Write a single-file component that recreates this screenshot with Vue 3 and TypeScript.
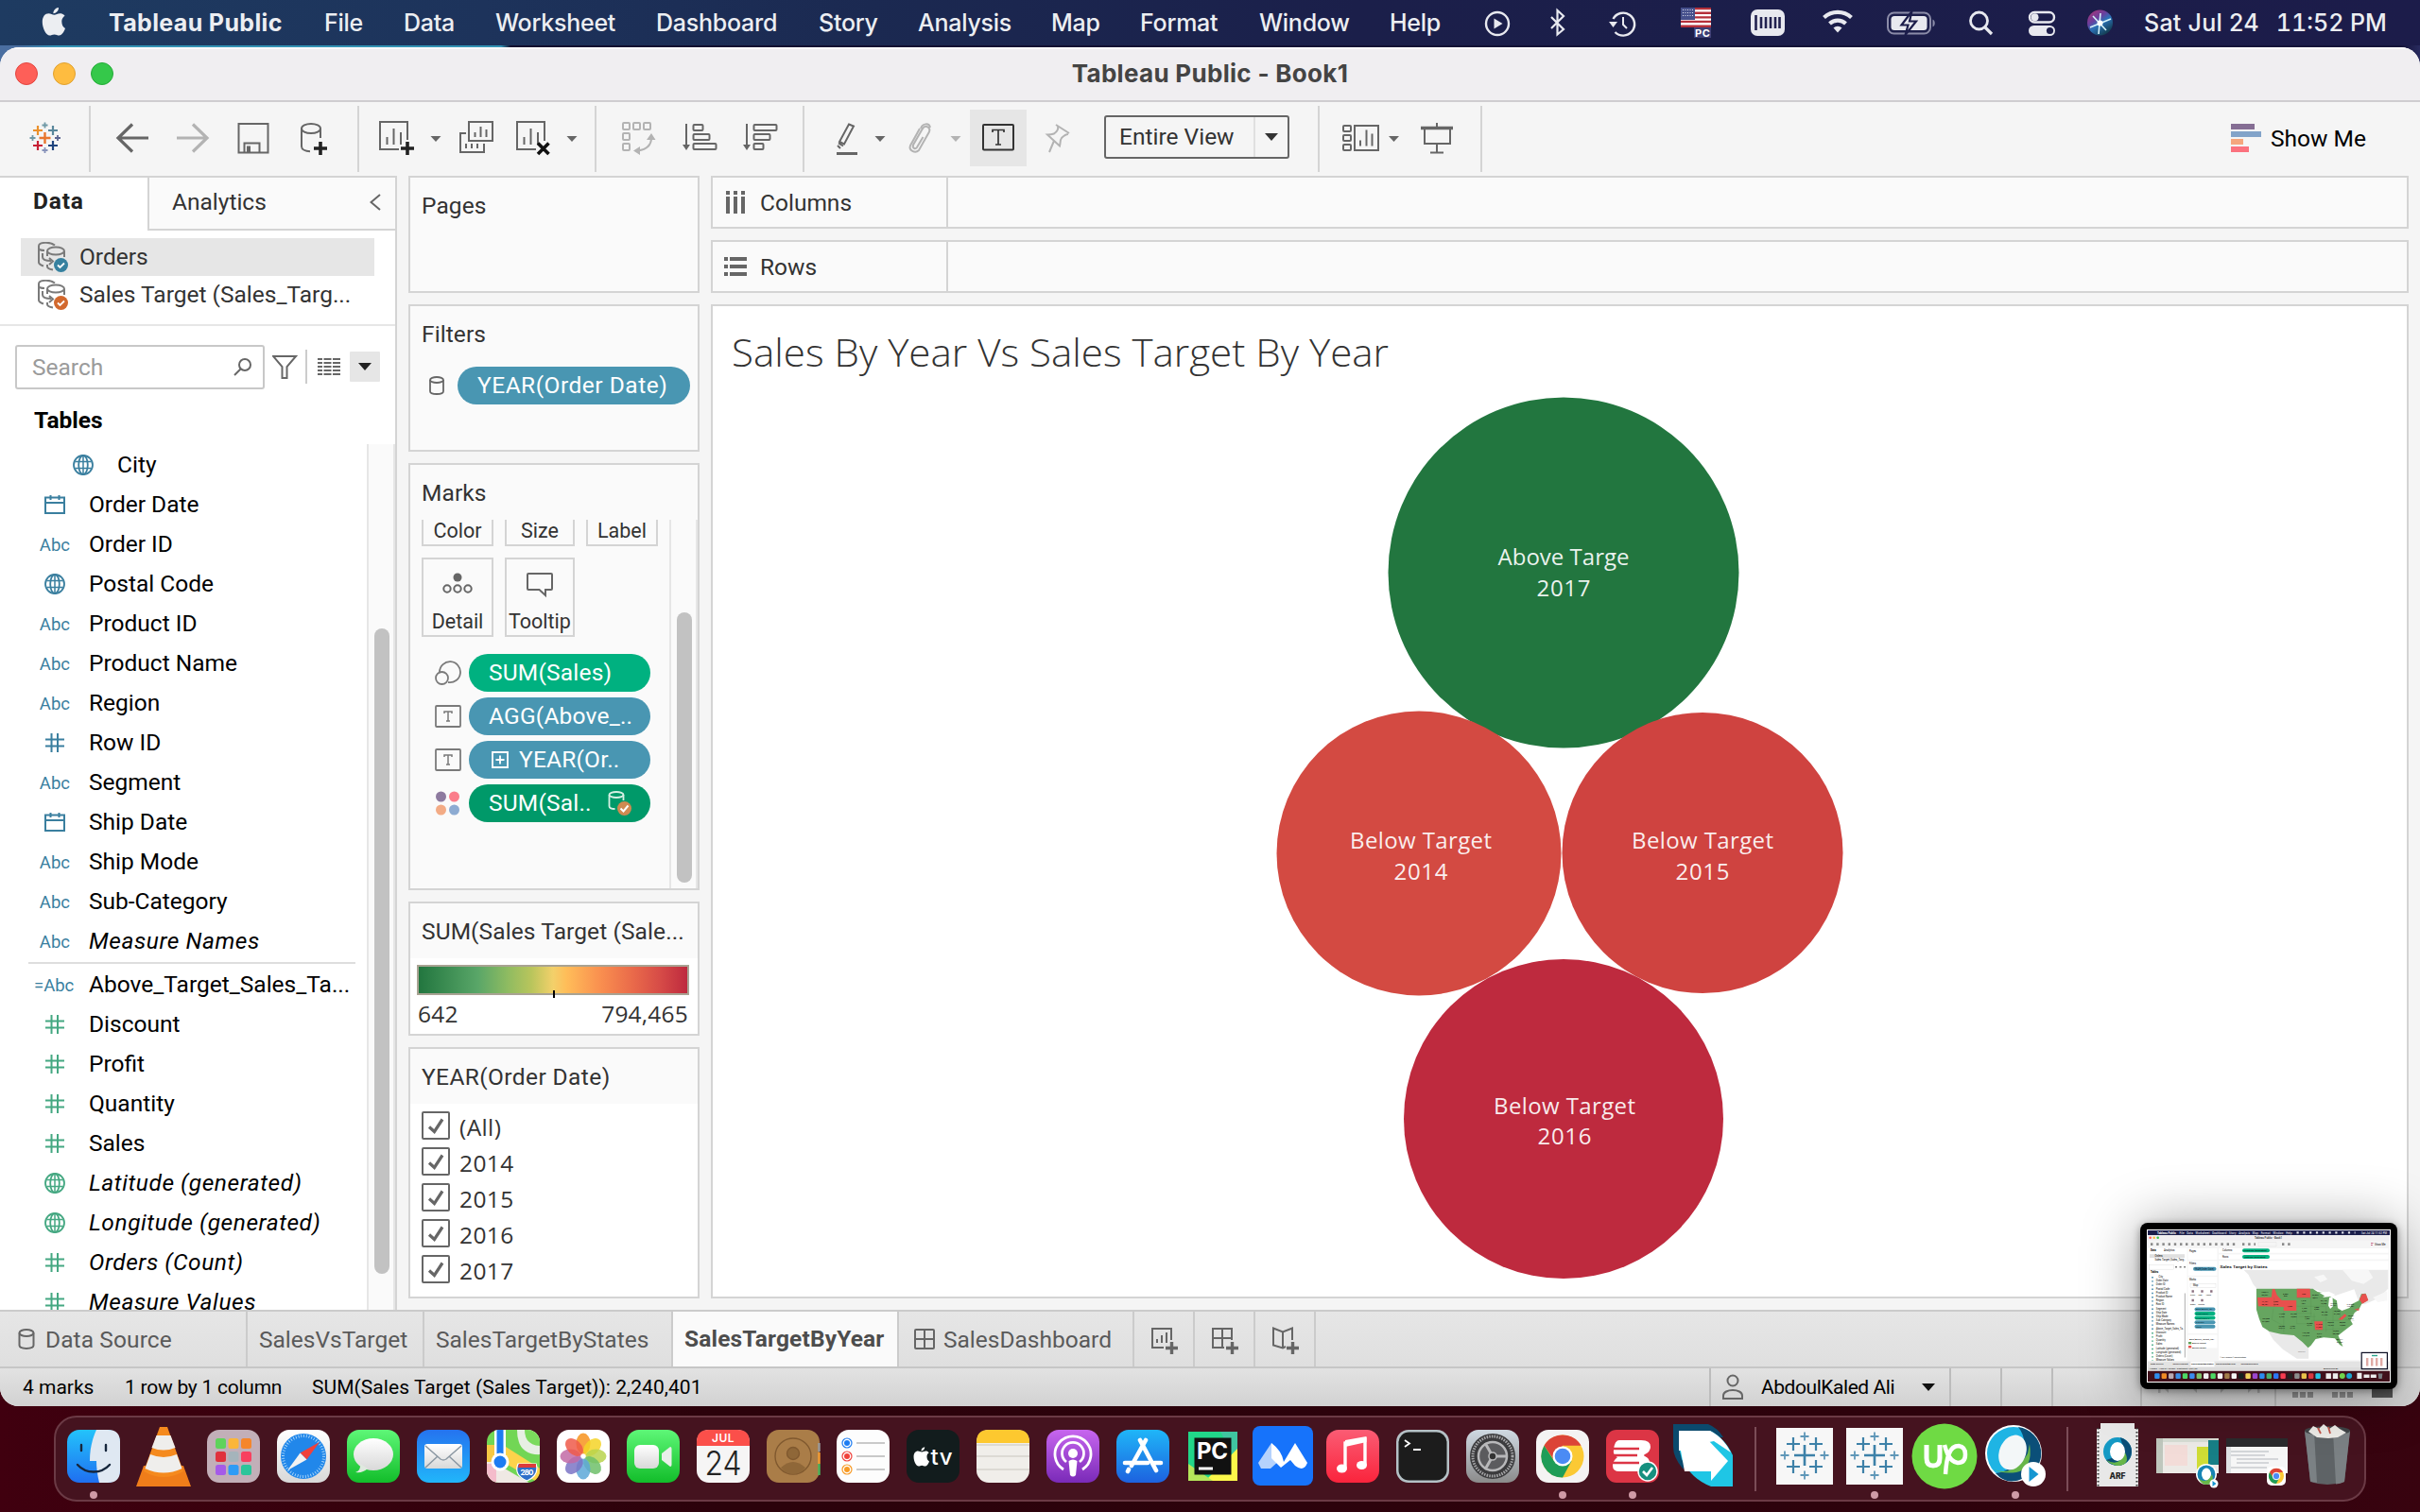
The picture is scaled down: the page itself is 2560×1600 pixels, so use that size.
<script setup lang="ts">
interface MenuItem { label: string; width: number; bold?: boolean }
interface Field { kind: 'geo' | 'date' | 'abc' | 'num' | 'calc'; label: string; generated?: boolean; nested?: boolean }
interface Cross { x: number; y: number; r: number; color: string; w: number }
interface Bubble { x: number; y: number; r: number; color: string; status: string; year: string; span: number; tx: number; ty: number }

const menu: MenuItem[] = [
  { label: 'Tableau Public', width: 228, bold: true },
  { label: 'File', width: 84 },
  { label: 'Data', width: 97 },
  { label: 'Worksheet', width: 170 },
  { label: 'Dashboard', width: 172 },
  { label: 'Story', width: 105 },
  { label: 'Analysis', width: 141 },
  { label: 'Map', width: 94 },
  { label: 'Format', width: 126 },
  { label: 'Window', width: 138 },
  { label: 'Help', width: 92 },
]

const dimensions: Field[] = [
  { kind: 'geo', label: 'City', nested: true },
  { kind: 'date', label: 'Order Date' },
  { kind: 'abc', label: 'Order ID' },
  { kind: 'geo', label: 'Postal Code' },
  { kind: 'abc', label: 'Product ID' },
  { kind: 'abc', label: 'Product Name' },
  { kind: 'abc', label: 'Region' },
  { kind: 'num', label: 'Row ID' },
  { kind: 'abc', label: 'Segment' },
  { kind: 'date', label: 'Ship Date' },
  { kind: 'abc', label: 'Ship Mode' },
  { kind: 'abc', label: 'Sub-Category' },
  { kind: 'abc', label: 'Measure Names', generated: true },
]

const measures: Field[] = [
  { kind: 'calc', label: 'Above_Target_Sales_Ta...' },
  { kind: 'num', label: 'Discount' },
  { kind: 'num', label: 'Profit' },
  { kind: 'num', label: 'Quantity' },
  { kind: 'num', label: 'Sales' },
  { kind: 'geo', label: 'Latitude (generated)', generated: true },
  { kind: 'geo', label: 'Longitude (generated)', generated: true },
  { kind: 'num', label: 'Orders (Count)', generated: true },
  { kind: 'num', label: 'Measure Values', generated: true },
]

const groups = [
  { name: 'dimensions', fields: dimensions },
  { name: 'measures', fields: measures },
]

const years = ['(All)', '2014', '2015', '2016', '2017']

const bubbles: Bubble[] = [
  { x: 1654, y: 606, r: 185.5, color: '#22763f', status: 'Above Targe', year: '2017', span: 139, tx: 1654, ty: 598 },
  { x: 1501, y: 903, r: 150.5, color: '#d34a42', status: 'Below Target', year: '2014', span: 150, tx: 1503, ty: 898 },
  { x: 1801, y: 902.5, r: 148.5, color: '#cf4340', status: 'Below Target', year: '2015', span: 150, tx: 1801, ty: 898 },
  { x: 1654, y: 1184, r: 169, color: '#be2a3e', status: 'Below Target', year: '2016', span: 150, tx: 1655, ty: 1178.5 },
]

const logo: Cross[] = [
  { x: 47.5, y: 132.5, r: 3, color: '#7099a6', w: 1.8 },
  { x: 40, y: 138, r: 5, color: '#eb912c', w: 2.2 },
  { x: 56, y: 138, r: 5, color: '#59879b', w: 2.2 },
  { x: 34.5, y: 146, r: 3, color: '#7099a6', w: 1.8 },
  { x: 47.5, y: 146, r: 6, color: '#e8762d', w: 2.4 },
  { x: 61, y: 146, r: 3, color: '#5c6692', w: 1.8 },
  { x: 40, y: 154, r: 5, color: '#c72035', w: 2.2 },
  { x: 56, y: 154, r: 5, color: '#1f447e', w: 2.2 },
  { x: 47.5, y: 159, r: 3, color: '#8792ba', w: 1.8 },
]

const dockCrosses: Cross[] = [
  { x: 0, y: -1, r: 11, color: '#3d81a8', w: 2.6 },
  { x: -12, y: -13, r: 7, color: '#3d81a8', w: 2.2 },
  { x: 12, y: -13, r: 7, color: '#3d81a8', w: 2.2 },
  { x: -12, y: 11, r: 7, color: '#3d81a8', w: 2.2 },
  { x: 12, y: 11, r: 7, color: '#3d81a8', w: 2.2 },
  { x: 0, y: -21, r: 4.5, color: '#5f97b8', w: 1.8 },
  { x: 0, y: 20, r: 4.5, color: '#5f97b8', w: 1.8 },
  { x: -21, y: -1, r: 4.5, color: '#5f97b8', w: 1.8 },
  { x: 21, y: -1, r: 4.5, color: '#5f97b8', w: 1.8 },
]

const cross = (c: Cross): string => `M${c.x - c.r} ${c.y}h${c.r * 2}M${c.x} ${c.y - c.r}v${c.r * 2}`

const petals = ['#f7931e', '#f5d327', '#b9d34c', '#6fbf6a', '#5da8d8', '#7b74c6', '#c26aa6', '#ee5a4a']
const launchpad = ['#5fd35b', '#fbb63a', '#f5862b', '#e0313c', '#a5b4bb', '#f8405f', '#a55be8', '#2f9bf5', '#2cc59a']
const miniDock = ['#2f8fee', '#f08a24', '#b8aab2', '#3b8fe6', '#4cd964', '#3a8bf0', '#7cc36a', '#f0f0f0', '#4cd964', '#f5f5f5', '#a37d4b', '#f5f5f5', '#15201f', '#f3d35c', '#9c45cf', '#2a8cf0', '#48b06a', '#2b78f5', '#f83b50', '#222222', '#8c8c8c', '#e9c14a', '#d9383f', '#26c4e4']
const miniFields = ['City', 'Order Date', 'Order ID', 'Postal Code', 'Product ID', 'Product Name', 'Region', 'Row ID', 'Segment', 'Ship Date', 'Ship Mode', 'Sub-Category', 'Measure Names', 'Above_Target_Sales_Ta..', 'Discount', 'Profit', 'Quantity', 'Sales', 'Latitude (generated)', 'Longitude (generated)', 'Orders (Count)', 'Measure Values']
const stateLabels: [number, number, string, string][] = [
  [1240, 265, '138,641', '56,667'], [1284, 270, '5,589', '833'], [1323, 270, '920', ''], [1347, 275, '29,863', '5,677'],
  [1240, 295, '17,431', '28,481'], [1263, 295, '4,382', '4,618'], [1293, 309, '1,603', ''], [1322, 292, '1,315', '704'],
  [1365, 292, '32,115', '12,953'], [1324, 316, '7,465', '2,929'], [1350, 312, '4,580', '3,383'], [1386, 300, '76,270', '36,161'],
  [1242, 350, '457,688', '274,087'], [1276, 335, '11,220', '3,766'], [1301, 335, '32,108', '15,203'], [1330, 342, '2,914', '1,236'],
  [1367, 328, '80,166', '41,246'], [1393, 326, '78,258', '31,402'], [1335, 363, '19,683', '3,177'], [1355, 368, '11,678', '14,267'],
  [1276, 372, '35,282', '24,914'], [1299, 372, '4,784', '2,147'], [1380, 362, '30,662', '19,104'], [1405, 362, '55,603', '19,866'],
  [1327, 394, '170,188', '121,072'], [1356, 398, '9,217', '3,131'], [1391, 388, '49,096', '28,785'], [1399, 415, '89,474', '54,202'],
  [1422, 303, '310,876', '176,381'], [1423, 340, '70,637', '9,932'],
]
</script>

<template>
  <div class="desktop">
    <header class="menubar">
      <svg class="apple" viewBox="0 0 26 34" width="26" height="34">
        <path fill="#eceef2" d="M18 2c.2 3.300-2.600 6.200-5.600 6.200C12.200 5 15 2.200 18 2zM21.300 16.600c0-2.700 1.400-4.500 3.300-5.800-1.500-2-3.700-2.600-5.200-2.600-2.400 0-4.200 1.500-6 1.500-1.900 0-3.700-1.500-6-1.500C3.700 8.200.8 11.500.8 17.200.8 24 5 31.600 8.500 31.600c1.800 0 2.700-1.200 5-1.200s3.100 1.200 5 1.200c3.200 0 5.700-5 6.500-7.500-2.400-1.200-3.700-3.900-3.700-7.500z" />
      </svg>
      <nav class="menus">
        <span v-for="m in menu" :key="m.label" :class="{ strong: m.bold }" :style="{ width: m.width + 'px' }">{{ m.label }}</span>
      </nav>
      <svg class="extras" viewBox="1563 0 695 48" width="695" height="48" fill="none" stroke="#e8e9ef" stroke-width="2.4">
        <circle cx="1584" cy="25" r="12" /><path d="M1580.500 19.500v11l9-5.500z" fill="#e8e9ef" stroke="none" />
        <path d="M1641 18l13 13-6.500 5.500V11l6.500 6-13 13" stroke-width="2.200" />
        <path d="M1706.500 20a12 12 0 1 1 2 14" /><path d="M1702 23h9l-4.500 6z" fill="#e8e9ef" stroke="none" /><path d="M1717 18v8l4 4" stroke-width="2" />
        <g stroke="none">
          <rect x="1778" y="8" width="32" height="21" fill="#fff" />
          <path fill="#b5303a" d="M1778 8h32v2.300h-32zM1778 12.600h32v2.300h-32zM1778 17.200h32v2.300h-32zM1778 21.800h32v2.300h-32zM1778 26.400h32v2.600h-32z" />
          <rect x="1778" y="8" width="15" height="13" fill="#46508c" />
          <path d="M1780 10.500h12M1780 13.500h12M1780 16.500h12" stroke="#dfe2f0" stroke-width="1" stroke-dasharray="1 1.500" />
          <rect x="1792" y="29" width="18" height="11" fill="#3d3f75" />
        </g>
        <text x="1793" y="38.500" class="pc">PC</text>
        <rect x="1852" y="10" width="36" height="28" rx="7" fill="#e8e9ef" stroke="none" />
        <path d="M1857.500 16v16M1863 18v12M1868 18v12M1873 18v12M1878 18v12M1882.500 18v12" stroke="#22224f" stroke-width="2.600" />
        <path d="M1929.500 18.500a21.500 21.500 0 0 1 29 0" stroke-width="4.200" /><path d="M1935.500 25a12.500 12.500 0 0 1 17 0" stroke-width="4.200" /><path d="M1944 34.500l-4.500-5a6.500 6.500 0 0 1 9 0z" fill="#e8e9ef" stroke="none" />
        <rect x="1997" y="13.500" width="45" height="22" rx="6.500" stroke="#8b8ca8" stroke-width="2" /><path d="M2044.500 20.500v8c3-1.300 3-6.700 0-8z" fill="#8b8ca8" stroke="none" />
        <rect x="2000.500" y="17" width="38" height="15" rx="3.500" fill="#e8e9ef" stroke="none" /><path d="M2022.500 12l-11 14.500h7l-3 10.500 11.500-14.500h-7z" fill="#e8e9ef" stroke="#1c1d4b" stroke-width="2.200" />
        <circle cx="2093.500" cy="22" r="9" stroke-width="2.800" /><path d="M2100 29l7 7" stroke-width="3.200" />
        <rect x="2147" y="13" width="26" height="10.500" rx="5.200" /><circle cx="2152.500" cy="18.200" r="4" fill="#e8e9ef" stroke="none" />
        <rect x="2146" y="27" width="28" height="11" rx="5.500" fill="#e8e9ef" stroke="none" /><circle cx="2168.500" cy="32.500" r="3.600" fill="#1c1d4b" stroke="none" />
        <defs><linearGradient id="siri" x1="0" y1="0" x2=".7" y2="1"><stop offset="0" stop-color="#b6336f" /><stop offset=".4" stop-color="#6a3f9e" /><stop offset=".6" stop-color="#2b72b8" /><stop offset="1" stop-color="#123a4a" /></linearGradient></defs>
        <circle cx="2221.500" cy="24" r="13.500" fill="url(#siri)" stroke="none" />
        <path d="M2211 29l22-9M2214 17l14 15M2222 14l-2 22" stroke="#d5f3fb" stroke-width="1.600" /><circle cx="2221.500" cy="24.500" r="3" fill="#fff" stroke="none" />
      </svg>
      <span class="clock"><span>Sat Jul 24</span><span class="time">11:52 PM</span></span>
    </header>

    <main class="window">
      <div class="titlebar">
        <i class="light red" /><i class="light amber" /><i class="light green" />
        <span class="title">Tableau Public - Book1</span>
      </div>

      <div class="toolbar">
        <svg class="seg" viewBox="0 112 96 70" width="96" height="70">
          <path v-for="(c, i) in logo" :key="i" :d="cross(c)" :stroke="c.color" :stroke-width="c.w" />
        </svg>
        <svg class="seg" viewBox="96 112 284 70" width="284" height="70" fill="none" stroke="#666" stroke-width="2">
          <path d="M125 146h32M140 131.500L125 146l15 14.500" stroke-width="3.200" />
          <path d="M187 146h32M204 131.500L219 146l-15 14.500" stroke="#b3b3b3" stroke-width="3.200" />
          <path d="M252.500 131h31v30.500h-31zM258.500 161v-9.500h16V161M264 161v-5.500h-2v5.500" />
          <ellipse cx="329" cy="136" rx="10" ry="5" /><path d="M319 136v19c0 3 4 5 9 5.300M339 136v10" />
          <path d="M332 157h14M339 150v14" stroke="#222" stroke-width="3.600" />
        </svg>
        <svg class="seg" viewBox="380 112 251 70" width="251" height="70" fill="none" stroke="#666" stroke-width="2">
          <path d="M422 158h-20v-29h29v19M409.500 153v-8M416.500 153v-17M424 153v-13" />
          <path d="M424 157h14M431 150v14" stroke="#222" stroke-width="3.600" />
          <path d="M455.500 144h11l-5.500 6z" fill="#666" stroke="none" />
          <path d="M496 129h25v20h-25zM502.500 145v-5M508.500 145v-11M514.500 145v-8M493 141h-6v20h25v-9M493 157v-5M499 157v-5M505 157v-5" />
          <path d="M567 158h-20v-29h29v19M554.500 153v-8M561.500 153v-17M569 153v-13M576 149v-8" />
          <path d="M569 151.500l11.500 11.500M580.500 151.500L569 163" stroke="#111" stroke-width="3.600" />
          <path d="M599.500 144h11l-5.500 6z" fill="#666" stroke="none" />
        </svg>
        <svg class="seg" viewBox="631 112 220 70" width="220" height="70" fill="none" stroke="#666" stroke-width="2">
          <g stroke="#b3b3b3">
            <rect x="659" y="130" width="7" height="7" rx="1" /><rect x="670" y="130" width="7" height="7" rx="1" /><rect x="681" y="130" width="7" height="7" rx="1" />
            <rect x="659" y="141" width="7" height="7" rx="1" /><rect x="659" y="152" width="7" height="7" rx="1" />
            <path d="M689 146c0 8-5 12-14 13.500" /><path d="M684 148l5-7 4.500 7zM677 155l-7 4.500 7 4.500z" fill="#b3b3b3" stroke="none" />
          </g>
          <path d="M726 131v24" /><path d="M722 153h8l-4 6z" fill="#666" stroke="none" />
          <rect x="733.500" y="132" width="10" height="6" rx="1" /><rect x="733.500" y="142" width="17" height="6" rx="1" /><rect x="733.500" y="152" width="24" height="6" rx="1" />
          <path d="M790 131v24" /><path d="M786 153h8l-4 6z" fill="#666" stroke="none" />
          <rect x="797.500" y="132" width="24" height="6" rx="1" /><rect x="797.500" y="142" width="17" height="6" rx="1" /><rect x="797.500" y="152" width="10" height="6" rx="1" />
        </svg>
        <svg class="seg open" viewBox="851 112 317 70" width="317" height="70" fill="none" stroke="#666" stroke-width="2">
          <path d="M898 131.500l5 2-10 19-5-2.500zM887 151.500l5 3M886 154l3 3" /><path d="M885 162.500h22" stroke-width="3" />
          <path d="M925.500 144h11l-5.500 6z" fill="#666" stroke="none" />
          <path d="M976.500 145l-6 10c-1.500 4-6 2-4.300-2l9.500-16.500c3-5 9.500-2 7 3.500L972 159c-4 4-11 0-9-5l10-18M984 135c-1-5-8-5-10 1" stroke="#b3b3b3" />
          <path d="M1005.500 144h11l-5.500 6z" fill="#b3b3b3" stroke="none" />
          <rect x="1026" y="116" width="60" height="60" fill="#e6e6e6" stroke="none" />
          <rect x="1040" y="132" width="32" height="26.500" rx="1" stroke="#333" /><path d="M1050 140v-2.500h12v2.500M1056 137.500V153M1053 153h6" stroke="#333" stroke-width="1.700" />
          <path d="M1117 132l14 9M1119 133.500c1 4-1 6-4 8-3 1-5 1-7 1l13 12c1-3 0-6 2-8.500 2-2 4-4 7-4M1115 149l-5 12" stroke="#b3b3b3" />
        </svg>
        <div class="fit"><span>Entire View</span><i><svg viewBox="0 0 14 8" width="14" height="8"><path d="M0 0h14l-7 8z" fill="#333" /></svg></i></div>
        <svg class="seg" viewBox="1364 112 32 70" width="32" height="70" />
        <svg class="seg" viewBox="1396 112 172 70" width="172" height="70" fill="none" stroke="#666" stroke-width="2">
          <rect x="1421" y="133" width="8" height="6" rx="1" /><rect x="1421" y="143" width="8" height="6" rx="1" /><rect x="1421" y="153" width="8" height="6" rx="1" />
          <path d="M1433 133h25v26h-25zM1439 154.500v-6M1445.500 154.500v-17M1451.500 154.500v-13" />
          <path d="M1469 144h11l-5.500 6z" fill="#666" stroke="none" />
          <path d="M1507 136v16h27v-16M1520 130v5M1520 152v10M1513 161.500h14" /><path d="M1503 135.500h34" stroke-width="3.500" />
        </svg>
        <div class="showme">
          <svg viewBox="0 0 32 30" width="32" height="30"><path fill="#856e94" d="M0 0h25v6H0z" /><path fill="#82a3c9" d="M0 8h32v6H0z" /><path fill="#f5a67d" d="M0 16h13v6H0z" /><path fill="#fb727e" d="M0 24h19v6H0z" /></svg>
          <span>Show Me</span>
        </div>
      </div>

      <section class="workspace">
        <aside class="side">
          <div class="tabs">
            <span class="on">Data</span>
            <span class="off">Analytics<svg viewBox="0 0 12 18" width="12" height="18"><path d="M11 1L1.500 9l9.500 8" fill="none" stroke="#666" stroke-width="2" /></svg></span>
          </div>
          <div class="sources">
            <div v-for="(s, i) in ['Orders', 'Sales Target (Sales_Targ...']" :key="s" class="source" :class="{ picked: i === 0 }">
              <svg viewBox="0 0 32 32" width="32" height="32" fill="none" stroke="#7a7a7a" stroke-width="2">
                <path d="M18 3.500C13-.5 1 0 1 4.500v17c0 2 2 3 5 4M1 7c1 2 4 2 6 2" /><ellipse cx="19" cy="9.500" rx="9" ry="4" /><path d="M28 10v6M10 10v5M5 12v4c0 3 3 4 9 4M12 17l4 3.500-4 3.500M10 24v2c0 2 3 3 6 3.500" />
                <circle cx="24.500" cy="24.500" r="7.500" :fill="i === 0 ? '#35809f' : '#d2682d'" stroke="none" /><path d="M21 24.500l2.500 2.500 4.500-4.500" stroke="#fff" stroke-width="1.800" />
              </svg>
              <span>{{ s }}</span>
            </div>
          </div>
          <div class="search">
            <div class="box"><span>Search</span><svg viewBox="0 0 19 19" width="19" height="19"><circle cx="12" cy="7" r="6" fill="none" stroke="#666" stroke-width="2" /><path d="M7.500 11.500L1 18" stroke="#666" stroke-width="2" /></svg></div>
            <svg viewBox="288 365 116 48" width="116" height="48" fill="none" stroke="#666" stroke-width="2">
              <path d="M289 377h24l-9.500 11v12h-5v-12z" /><path d="M324 370v36" stroke="#ccc" />
              <g stroke-width="2"><path d="M336 380h5M342.500 380h8M352 380h8M336 384h5M342.500 384h8M352 384h8M336 388h5M342.500 388h8M352 388h8M336 392h5M342.500 392h8M352 392h8M336 396h5M342.500 396h8M352 396h8" /></g>
              <rect x="370" y="372" width="32" height="32" rx="1" fill="#e6e6e6" stroke="none" /><path d="M379 384h14l-7 8z" fill="#222" stroke="none" />
            </svg>
          </div>
          <h3>Tables</h3>
          <div class="fields">
            <div class="list">
              <div v-for="g in groups" :key="g.name" class="group" :class="g.name">
                <div v-for="f in g.fields" :key="f.label" class="field" :class="{ nested: f.nested, generated: f.generated }">
                  <b v-if="f.kind === 'abc'">Abc</b>
                  <b v-else-if="f.kind === 'calc'">=Abc</b>
                  <svg v-else-if="f.kind === 'geo'" viewBox="0 0 22 22" width="22" height="22" fill="none" stroke="currentColor" stroke-width="1.800"><circle cx="11" cy="11" r="10" /><ellipse cx="11" cy="11" rx="4.800" ry="10" /><path d="M11 1v20M2.500 7.500h17M2.500 14.500h17" stroke-width="1.500" /></svg>
                  <svg v-else-if="f.kind === 'date'" viewBox="0 0 22 22" width="22" height="22" fill="none" stroke="currentColor" stroke-width="2"><path d="M1 3.500h20V20H1zM1 9h20M6.500 1v5M15.500 1v5" /></svg>
                  <svg v-else viewBox="0 0 22 22" width="22" height="22" fill="none" stroke="currentColor" stroke-width="2"><path d="M1 7.500h20M1 14.500h20M7.500 1v20M14 1v20" /></svg>
                  <span>{{ f.label }}</span>
                </div>
              </div>
            </div>
            <div class="track"><i /></div>
          </div>
        </aside>

        <div class="cards">
          <div class="card pages"><h4>Pages</h4></div>
          <div class="card filters">
            <h4>Filters</h4>
            <div class="frow">
              <svg viewBox="0 0 16 20" width="16" height="20" fill="none" stroke="#666" stroke-width="1.800"><ellipse cx="8" cy="4" rx="7" ry="3" /><path d="M1 4v12c0 4 14 4 14 0V4" /></svg>
              <span class="pill wide">YEAR(Order Date)</span>
            </div>
          </div>
          <div class="card marks">
            <h4>Marks</h4>
            <div class="marksbody">
              <div class="encodings">
                <div class="btns cut"><span>Color</span><span>Size</span><span>Label</span></div>
                <div class="btns">
                  <span><svg viewBox="0 0 32 24" width="32" height="24" fill="none" stroke="#666" stroke-width="2"><circle cx="16" cy="6" r="4.500" fill="#666" stroke="none" /><circle cx="5" cy="18" r="3.700" /><circle cx="16" cy="18" r="3.700" /><circle cx="27" cy="18" r="3.700" /></svg>Detail</span>
                  <span><svg viewBox="0 0 30 28" width="30" height="28" fill="none" stroke="#666" stroke-width="2"><path d="M3 2h24q1 0 1 1v15q0 1-1 1h-6v6l-6.500-6H3q-1 0-1-1V3q0-1 1-1z" /></svg>Tooltip</span>
                </div>
                <div class="mrow">
                  <svg viewBox="0 0 28 28" width="28" height="28" fill="none" stroke="#7a7a7a" stroke-width="1.800"><path d="M5 13A11 11 0 1 1 14 24" /><circle cx="7.500" cy="19.500" r="6.500" /></svg>
                  <span class="pill sales">SUM(Sales)</span>
                </div>
                <div v-for="n in 2" :key="n" class="mrow">
                  <svg viewBox="0 0 28 28" width="28" height="28" fill="none" stroke="#7a7a7a" stroke-width="1.800"><rect x="1" y="3" width="26" height="22" rx="1" /><path d="M10 11V9h8v2M14 9v10M12 19h4" stroke-width="1.500" /></svg>
                  <span v-if="n === 1" class="pill">AGG(Above_..</span>
                  <span v-else class="pill"><svg class="plus" viewBox="0 0 18 18" width="18" height="18" fill="none" stroke="#fff" stroke-width="1.800"><path d="M1 1h16v16H1zM4.500 9h9M9 4.500v9" /></svg>YEAR(Or..</span>
                </div>
                <div class="mrow">
                  <svg viewBox="0 0 28 28" width="28" height="28"><circle cx="6.500" cy="7" r="5.500" fill="#8d7a9f" /><circle cx="20.500" cy="7" r="5.500" fill="#fb7d8b" /><circle cx="6.500" cy="21" r="5.500" fill="#f3ab85" /><circle cx="20.500" cy="21" r="5.500" fill="#8dabd2" /></svg>
                  <span class="pill target">SUM(Sal..<svg class="blend" viewBox="0 0 26 28" width="26" height="28" fill="none" stroke="#d7f0e4" stroke-width="1.800"><ellipse cx="9" cy="5" rx="7.500" ry="3" /><path d="M1.500 5v12c0 2 3 3 6 3M16.500 5v6" /><circle cx="17.500" cy="19.500" r="7.500" fill="#d08a52" stroke="none" /><path d="M13.500 19.500l3 3 5-6" stroke="#fff" stroke-width="2" /></svg></span>
                </div>
              </div>
              <div class="track"><i /></div>
            </div>
          </div>
          <div class="card legend">
            <h4>SUM(Sales Target (Sale...</h4>
            <div class="ramp"><i /></div>
            <div class="ends"><span>642</span><span>794,465</span></div>
          </div>
          <div class="card yearcard">
            <h4>YEAR(Order Date)</h4>
            <label v-for="y in years" :key="y"><svg viewBox="0 0 30 30" width="30" height="30" fill="none" stroke="#666"><rect x="1" y="1" width="28" height="28" rx="1" stroke-width="2" /><path d="M8 16.500l5.500 5L22 8.500" stroke-width="3.200" /></svg><span>{{ y }}</span></label>
          </div>
        </div>

        <div class="canvas">
          <div class="shelf"><span><svg viewBox="0 0 24 24" width="24" height="24" fill="#666"><path d="M2 0h4v4H2zM10 0h4v4h-4zM18 0h4v4h-4zM2 6h4v18H2zM10 6h4v18h-4zM18 6h4v18h-4z" /></svg>Columns</span></div>
          <div class="shelf"><span><svg viewBox="0 0 24 24" width="24" height="24" fill="#666"><path d="M0 2h4v4H0zM0 10h4v4H0zM0 18h4v4H0zM6 2h18v4H6zM6 10h18v4H6zM6 18h18v4H6z" /></svg>Rows</span></div>
          <div class="view">
            <svg viewBox="754 324 1792 1048" width="1792" height="1048">
              <text x="774" y="388" class="vtitle" textLength="695" lengthAdjust="spacingAndGlyphs">Sales By Year Vs Sales Target By Year</text>
              <g v-for="b in bubbles" :key="b.year">
                <circle :cx="b.x" :cy="b.y" :r="b.r" :fill="b.color" />
                <text :x="b.tx" :y="b.ty" class="mark" :textLength="b.span">{{ b.status }}</text>
                <text :x="b.tx" :y="b.ty + 32.5" class="mark" textLength="57">{{ b.year }}</text>
              </g>
            </svg>
          </div>
        </div>
      </section>

      <div class="sheets">
        <span class="ds"><svg viewBox="0 0 18 22" width="18" height="22" fill="none" stroke="#666" stroke-width="2"><ellipse cx="9" cy="4.500" rx="7.500" ry="3.500" /><path d="M1.500 4.500v13c0 4.500 15 4.500 15 0v-13" /></svg>Data Source</span>
        <span class="s1">SalesVsTarget</span>
        <span class="s2">SalesTargetByStates</span>
        <span class="s3 current">SalesTargetByYear</span>
        <span class="s4"><svg viewBox="0 0 22 22" width="22" height="22" fill="none" stroke="#666" stroke-width="2"><rect x="1" y="1" width="20" height="20" rx="1" /><path d="M1 11h20M11 1v20" /></svg>SalesDashboard</span>
        <span class="add"><svg viewBox="0 0 30 30" width="30" height="30" fill="none" stroke="#666" stroke-width="2"><path d="M14 22H2V2h20v12M7 17v-4M12 17V9M17 17V6" /><path d="M16 22.500h13M22.500 16v13" stroke-width="3.400" /></svg></span>
        <span class="add"><svg viewBox="0 0 30 30" width="30" height="30" fill="none" stroke="#666" stroke-width="2"><path d="M14 22H2V2h20v12M2 12h20M12 2v20" /><path d="M16 22.500h13M22.500 16v13" stroke-width="3.400" /></svg></span>
        <span class="add"><svg viewBox="0 0 30 30" width="30" height="30" fill="none" stroke="#666" stroke-width="2"><path d="M15 21l-3 1.500-10-3V1.500l10 4 10-4V14M12 5.500v17" /><path d="M16 22.500h13M22.500 16v13" stroke-width="3.400" /></svg></span>
      </div>

      <footer class="status">
        <span class="t1">4 marks</span><span class="t2">1 row by 1 column</span><span class="t3">SUM(Sales Target (Sales Target)): 2,240,401</span>
        <div class="user">
          <svg viewBox="0 0 22 28" width="22" height="28" fill="none" stroke="#666" stroke-width="2"><circle cx="11" cy="7" r="5.500" /><path d="M1 26v-3c0-8 20-8 20 0v3z" /></svg>
          <span>AbdoulKaled Ali</span>
          <svg viewBox="0 0 14 8" width="14" height="8"><path d="M0 0h14l-7 8z" fill="#111" /></svg>
        </div>
        <svg class="nav" viewBox="2064 1448 496 40" width="496" height="40" fill="#b0b0b0">
          <path d="M2117 1448v40M2171 1448v40M2265 1448v40M2407 1448v40" stroke="#bcbcbc" stroke-width="2" />
          <path d="M2283 1458h2.500v16h-2.500zM2294 1458v16l-8-8zM2324 1458v16l-8-8zM2349 1458v16l8-8zM2378 1458v16l8-8zM2388 1458h2.500v16h-2.500z" />
          <path d="M2425 1464h6v5h-6zM2433 1464h6v5h-6zM2441 1464h6v5h-6zM2425 1473h6v6h-6zM2433 1473h6v6h-6zM2441 1473h6v6h-6zM2467 1465h22v5h-22zM2467 1473h6v6h-6zM2475 1473h6v6h-6zM2483 1473h6v6h-6z" fill="#909090" /><path d="M2509 1460h22v19h-22z" fill="#555" />
        </svg>
      </footer>
    </main>

    <div class="preview">
      <svg viewBox="0 0 2560 1600" width="256" height="160">
        <rect width="2560" height="1600" fill="#f5f5f5" />
        <rect width="2560" height="50" fill="#1c1e4c" />
        <text x="100" y="36" fill="#fff" font-size="30" font-weight="700">Tableau Public</text>
        <text x="335" y="36" fill="#fff" font-size="28" textLength="1190">File&nbsp; &nbsp;Data&nbsp; &nbsp;Worksheet&nbsp; &nbsp;Dashboard&nbsp; &nbsp;Story&nbsp; &nbsp;Analysis&nbsp; &nbsp;Map&nbsp; &nbsp;Format&nbsp; &nbsp;Window&nbsp; &nbsp;Help</text>
        <text x="2260" y="36" fill="#fff" font-size="28" textLength="270">Sat Jul 24 11:52 PM</text>
        <path d="M1575 24h620" stroke="#dcdde6" stroke-width="22" stroke-dasharray="22 46" />
        <rect y="50" width="2560" height="56" fill="#f0eef1" />
        <circle cx="27" cy="78" r="13" fill="#fe5f58" /><circle cx="67" cy="78" r="13" fill="#febc40" /><circle cx="107" cy="78" r="13" fill="#35c84a" />
        <text x="1130" y="86" font-size="28" font-weight="700" fill="#444">Tableau Public - Book1</text>
        <path d="M30 146h380M400 146h230M650 146h300M1000 146h140M1420 146h120" stroke="#8a8a8a" stroke-width="26" stroke-dasharray="24 38" />
        <path d="M1170 125h190v44h-190z" fill="none" stroke="#ddd" stroke-width="4" />
        <text x="2400" y="155" font-size="28">Show Me</text><path d="M2360 135h25M2360 155h18" stroke="#c66a8a" stroke-width="12" />
        <rect y="186" width="415" height="1200" fill="#fff" /><rect x="20" y="252" width="370" height="38" fill="#e0e0e0" />
        <text x="30" y="222" font-size="28" font-weight="700">Data</text><text x="170" y="222" font-size="28">Analytics</text>
        <text x="75" y="280" font-size="28">Orders</text><text x="75" y="322" font-size="28">Sales Target (Sales_Targ..</text>
        <rect x="18" y="365" width="260" height="46" fill="#fff" stroke="#ccc" stroke-width="3" /><path d="M290 388h110" stroke="#777" stroke-width="16" stroke-dasharray="20 26" />
        <text x="30" y="452" font-size="28" font-weight="700">Tables</text>
        <text v-for="(f, i) in miniFields" :key="f" :x="i === 0 ? 115 : 88" :y="500 + i * 42" font-size="27">{{ f }}</text>
        <path d="M50 490v560" stroke="#3c86a8" stroke-width="16" stroke-dasharray="14 28" /><path d="M50 1080v300" stroke="#3aa57a" stroke-width="16" stroke-dasharray="14 28" />
        <path d="M394 665v680" stroke="#bbb" stroke-width="12" />
        <path d="M425 190h310v120H425zM425 322h310v156H425zM425 490h310v600H425zM425 1104h310v140H425z" fill="#fff" />
        <text x="440" y="226" font-size="26">Pages</text><text x="440" y="362" font-size="26">Filters</text><text x="440" y="530" font-size="26">Marks</text>
        <rect x="480" y="388" width="245" height="40" rx="20" fill="#4996b2" /><text x="495" y="418" font-size="26" fill="#123">YEAR(Order Date)</text>
        <rect x="450" y="562" width="270" height="40" fill="#fff" stroke="#ccc" stroke-width="3" /><text x="480" y="592" font-size="26">Map</text>
        <path d="M465 645h270M465 740h190" stroke="#8a7080" stroke-width="24" stroke-dasharray="24 74" /><text x="450" y="690" font-size="22">Color&nbsp; &nbsp; &nbsp; Size&nbsp; &nbsp; &nbsp; &nbsp; Label</text><text x="450" y="785" font-size="22">Detail&nbsp; &nbsp; &nbsp;Tooltip</text>
        <rect v-for="n in 5" :key="n" x="495" :y="770 + n * 46 - 2" width="220" height="40" rx="20" :fill="n === 2 || n === 3 ? '#00b180' : '#4996b2'" />
        <text v-for="(p, n) in ['AGG(Above_Ta..', 'SUM(Sales)', 'SUM(Sales T..', 'Country', 'State']" :key="p" x="510" :y="843 + n * 46" font-size="25" fill="#0c2b33">{{ p }}</text>
        <text x="440" y="1160" font-size="25">AGG(Above_Target_Sal..</text>
        <rect x="430" y="1180" width="32" height="24" fill="#5fa35a" /><rect x="430" y="1220" width="32" height="24" fill="#e8504d" /><text x="470" y="1204" font-size="25">Above Target</text><text x="470" y="1246" font-size="25">Below Target</text>
        <path d="M750 190h1796v48H750zM750 256h1796v48H750zM750 322h1796v1050H750z" fill="#fff" />
        <text x="790" y="222" font-size="26">Columns</text><text x="790" y="290" font-size="26">Rows</text>
        <rect x="1000" y="192" width="290" height="40" rx="20" fill="#00b180" /><rect x="1000" y="260" width="290" height="40" rx="20" fill="#00b180" />
        <text x="1012" y="221" font-size="25">Longitude (generated)</text><text x="1022" y="289" font-size="25">Latitude (generated)</text>
        <text x="765" y="395" font-size="44" font-weight="500" textLength="500" lengthAdjust="spacingAndGlyphs">Sales Target by States</text>
        <g transform="scale(4.975 3.3333) translate(-991 -67)">
          <path fill="#e9e9e9" d="M1195 192h307v60l-20 30-30 20-12-8-10-40-40 20-45-20-122-2-8-15-10-30zM1246 384l30 8 25 4 22 22 10 18v38h-25l-30-30-20-30z" />
          <path fill="#f7f7f7" d="M1405 192h55l10 25-20 20-25-10zM1345 215l20-8 8 15-15 10zM1470 280l30-20v30l-20 5z" />
          <path fill="#66a560" d="M1222 252h120l10 10 20 5-9 13 16-3 14 13 2 24 9 8 16-9 6-13 14-10 5-21 9-2 5 21-13 12-6 18-9 10-9 24 5 13-21 24-10 12 10 35-7-6-10-20-24-3-17 5-10 20-6 8-12-18-18-22-28-4-24-8-15-14-7-26-6-30z" />
          <path fill="#fff" d="M1377 280l7-2 1 30-6 8-4-10zM1356 265l20-4 14 10-12 5-12-2zM1394 295l6-8 6 12-4 14z" />
          <path fill="#e8504d" d="M1224 280l30-1 2-26h5l5 20 10 16h31v33h-27v-12l-54-2zM1308 252h28l1 29h-29zM1345 356h18v27h-16zM1396 350l8-10 6-8 4 6-10 13zM1441 286l6-17h8l5 20-13 11zM1430 318l10-4v8z" />
          <path fill="none" stroke="#4d8449" stroke-width=".5" d="M1308 281h65M1308 308h60M1260 280v30M1280 323v68M1308 323v40M1258 315l-3 35 25 20M1338 281v60M1312 341h36M1308 363h32v-10h60M1345 330v55M1370 300v90M1385 320v80M1348 383l60-4M1400 320v30M1410 350l20 3M1310 330h30" />
        </g>
        <g v-for="(s, i) in stateLabels" :key="i" font-size="22" text-anchor="middle">
          <text :x="(s[0] - 991) * 4.975" :y="(s[1] - 67) * 3.3333">{{ s[2] }}</text><text :x="(s[0] - 991) * 4.975" :y="(s[1] - 67) * 3.3333 + 27">{{ s[3] }}</text>
        </g>
        <text x="1590" y="1285" font-size="24" fill="#888">Mexico</text><text x="765" y="1348" font-size="18">© 2021 Mapbox © OpenStreetMap</text>
        <rect y="1386" width="2560" height="60" fill="#e3e3e3" /><rect x="455" y="1388" width="250" height="58" fill="#fff" />
        <text x="30" y="1424" font-size="25">Data Source</text><text x="265" y="1424" font-size="25">SalesVsTarget</text><text x="460" y="1424" font-size="25" font-weight="700">SalesTargetByStates</text><text x="720" y="1424" font-size="25">SalesTargetByYear</text><text x="985" y="1424" font-size="25">SalesDashboard</text>
        <rect y="1446" width="2560" height="42" fill="#dcdcdc" /><text x="20" y="1474" font-size="22">4 marks&nbsp; &nbsp;1 row by 1 column&nbsp; &nbsp;SUM(Sales): 2,297,201</text><text x="1860" y="1474" font-size="22">AbdoulKaled Ali</text>
        <rect y="1488" width="2560" height="112" fill="#40101b" />
        <rect v-for="(c, i) in miniDock" :key="i" :x="72 + i * 74" y="1512" width="54" height="58" rx="12" :fill="c" />
        <path d="M1885 1512h54v58h-54zM1958 1512h54v58h-54zM2214 1508h50v62h-50zM2285 1525h60v36h-60zM2358 1525h60v36h-60z" fill="#ededed" /><circle cx="2058" cy="1541" r="30" fill="#70d44b" /><circle cx="2131" cy="1541" r="30" fill="#1aa5cf" /><path d="M2436 1515h48l-7 56h-34z" fill="#777b80" />
        <rect x="2262" y="1294" width="272" height="172" fill="#fff" stroke="#0b0d22" stroke-width="12" /><path d="M2310 1350h24v86h-24zM2360 1350h24v86h-24zM2410 1350h24v86h-24zM2460 1350h24v86h-24z" fill="#e0aaa5" /><path d="M2370 1325h60" stroke="#2aa58c" stroke-width="14" />
      </svg>
    </div>

    <footer class="dockbar">
      <div class="dock">
        <svg class="app" viewBox="-37 -43 74 91">
          <defs>
            <linearGradient id="blue" x1="0" y1="0" x2="0" y2="1"><stop offset="0" stop-color="#23c3fb" /><stop offset="1" stop-color="#1f6ff0" /></linearGradient>
            <linearGradient id="mail" x1="0" y1="0" x2="0" y2="1"><stop offset="0" stop-color="#2573ef" /><stop offset="1" stop-color="#21b6fa" /></linearGradient>
            <linearGradient id="lime" x1="0" y1="0" x2="0" y2="1"><stop offset="0" stop-color="#5ef777" /><stop offset="1" stop-color="#12bd2a" /></linearGradient>
            <linearGradient id="pale" x1="0" y1="0" x2="0" y2="1"><stop offset="0" stop-color="#fff" /><stop offset="1" stop-color="#d8d8d8" /></linearGradient>
            <linearGradient id="pink" x1="0" y1="0" x2="0" y2="1"><stop offset="0" stop-color="#fb5c74" /><stop offset="1" stop-color="#fa243c" /></linearGradient>
            <linearGradient id="violet" x1="0" y1="0" x2="0" y2="1"><stop offset="0" stop-color="#c766ee" /><stop offset="1" stop-color="#7a2ab8" /></linearGradient>
            <linearGradient id="metal" x1="0" y1="0" x2="0" y2="1"><stop offset="0" stop-color="#cfd9e2" /><stop offset="1" stop-color="#8b8b8b" /></linearGradient>
            <linearGradient id="store" x1="0" y1="0" x2="0" y2="1"><stop offset="0" stop-color="#1fb6f8" /><stop offset="1" stop-color="#1d62df" /></linearGradient>
          </defs>
          <rect x="-28" y="-28" width="56" height="56" rx="13" fill="url(#blue)" />
          <path d="M3-28h12q13 0 13 13v30q0 13-13 13H6C4 20 3 12 3 5h-7c0-14 3-24 7-33z" fill="#dfe8f2" />
          <path d="M-13-12v6M13-12v6M-17 9c9 10 25 10 34 0" fill="none" stroke="#16263c" stroke-width="2.400" stroke-linecap="round" />
          <circle cx="0" cy="41" r="4" fill="#cf9aa6" />
        </svg>
        <svg class="app" viewBox="-37 -43 74 91"><path d="M-21 10h42l8 22h-58z" fill="#ef7d1a" /><path d="M-4-31h8l17 47q-21 12-42 0z" fill="#f58a1e" /><path d="M-7.500-22h15l5 13q-12.500 5-25 0zM-14-2q14 6 28 0l5.500 15q-19.500 9-39 0z" fill="#efeeec" /></svg>
        <svg class="app" viewBox="-37 -43 74 91"><rect x="-28" y="-28" width="56" height="56" rx="13" fill="#c2afb8" /><rect v-for="(c, i) in launchpad" :key="i" :x="-19 + (i % 3) * 13.500" :y="-19 + Math.floor(i / 3) * 14" width="11" height="11" rx="2.500" :fill="c" /></svg>
        <svg class="app" viewBox="-37 -43 74 91"><rect x="-28" y="-28" width="56" height="56" rx="13" fill="url(#pale)" /><circle r="24" fill="#2187ea" /><circle r="21.500" fill="none" stroke="#bfe2fb" stroke-width="3" stroke-dasharray=".8 2" /><path d="M17-15L3.500 3.500l-7-7z" fill="#f0413b" /><path d="M-17 15L-3.500-3.500l7 7z" fill="#f2f2f2" /></svg>
        <svg class="app" viewBox="-37 -43 74 91"><rect x="-28" y="-28" width="56" height="56" rx="13" fill="url(#lime)" /><ellipse cy="-2" rx="21" ry="17" fill="url(#pale)" /><path d="M-14 8q1 7-5 9 8 1 13-4z" fill="#dfe9df" /></svg>
        <svg class="app" viewBox="-37 -43 74 91"><rect x="-28" y="-28" width="56" height="56" rx="13" fill="url(#mail)" /><rect x="-20" y="-13" width="40" height="26" rx="3" fill="url(#pale)" /><path d="M-19-11L-3 3q3 2 6 0l16-14M-19 12L-6 0M19 12L6 0" fill="none" stroke="#8a97a2" stroke-width="1.500" /></svg>
        <svg class="app" viewBox="-37 -43 74 91"><defs><clipPath id="tile"><rect x="-28" y="-28" width="56" height="56" rx="13" /></clipPath></defs><g clip-path="url(#tile)"><path d="M-28-28h56v56h-56z" fill="#72d655" /><path d="M4-28q0 28 26 26v-26z" fill="#e7efe3" /><path d="M12-28q0 17 18 17v-17z" fill="#7bdb5c" /><path d="M-28-4L30 30v-16L-8-10h-20z" fill="#fdd34b" /><path d="M-28 2v28H20z" fill="#efe9e4" /><path d="M-28-12h12v18h-12z" fill="#f7c843" /><path d="M-28 8h10v20h-10z" fill="#f4bccb" /><path d="M-14-28V5" stroke="#fff" stroke-width="12" /><path d="M-14-28V5" stroke="#1d7cf2" stroke-width="7" /><circle cx="-14" cy="6" r="9.500" fill="#fff" /><circle cx="-14" cy="6" r="6.500" fill="#1d7cf2" /><path d="M5 8h19q4 12-9.500 18Q0 20 5 8z" fill="#2e6fc9" stroke="#fff" stroke-width="1.200" /><path d="M6 8h18v4H5z" fill="#dd3b3b" /></g><text x="7.500" y="20" font-size="8" font-weight="700" fill="#fff" textLength="14">280</text></svg>
        <svg class="app" viewBox="-37 -43 74 91"><rect x="-28" y="-28" width="56" height="56" rx="13" fill="#fff" /><ellipse v-for="(c, i) in petals" :key="i" cx="0" cy="-13.500" rx="7.500" ry="11" :fill="c" fill-opacity=".85" :transform="`rotate(${i * 45})`" /></svg>
        <svg class="app" viewBox="-37 -43 74 91"><rect x="-28" y="-28" width="56" height="56" rx="13" fill="url(#lime)" /><rect x="-20" y="-12" width="26" height="25" rx="6" fill="url(#pale)" /><path d="M9-3l9-7q1.500 0 1.500 2V9q0 2-1.500 2L9 4z" fill="#e9efe9" /></svg>
        <svg class="app" viewBox="-37 -43 74 91"><rect x="-28" y="-28" width="56" height="56" rx="13" fill="#f6f5f5" /><path d="M-28-11v-4q0-13 13-13h30q13 0 13 13v4z" fill="#fb4f4a" /><text y="-15" font-size="12" font-weight="600" fill="#fff" text-anchor="middle" letter-spacing=".5">JUL</text><text y="20" font-size="35" font-weight="300" fill="#222" text-anchor="middle" textLength="39" lengthAdjust="spacingAndGlyphs">24</text></svg>
        <svg class="app" viewBox="-37 -43 74 91"><rect x="-28" y="-28" width="56" height="56" rx="13" fill="#aa7d48" /><path d="M27.500-14v9" stroke="#999" stroke-width="2.500" /><path d="M27.500-4V8" stroke="#f19b33" stroke-width="2.500" /><path d="M27.500 8v12" stroke="#4db25a" stroke-width="2.500" /><g fill="none" stroke="#80592f" stroke-width="1.400"><circle r="19" /><circle cy="-3" r="6.500" fill="#8f6738" /></g><path d="M-13 12q13-12 26 0-5 7-13 7t-13-7z" fill="#8f6738" /></svg>
        <svg class="app" viewBox="-37 -43 74 91"><rect x="-28" y="-28" width="56" height="56" rx="13" fill="#fdfdfd" /><path d="M-7-14h30M-7 0h30M-7 14h30" stroke="#c9c9c9" stroke-width="1.800" /><g fill="#fff" stroke-width="1.200"><circle cx="-17" cy="-14" r="5" stroke="#1d7cf2" /><circle cx="-17" r="5" stroke="#f0413b" /><circle cx="-17" cy="14" r="5" stroke="#f79a25" /></g><circle cx="-17" cy="-14" r="3" fill="#1d7cf2" /><circle cx="-17" r="3" fill="#f0413b" /><circle cx="-17" cy="14" r="3" fill="#f79a25" /></svg>
        <svg class="app" viewBox="-37 -43 74 91"><rect x="-28" y="-28" width="56" height="56" rx="13" fill="#121c1d" /><path transform="translate(-21 -11) scale(.68)" fill="#fff" d="M18 2c.2 3.300-2.600 6.200-5.600 6.200C12.200 5 15 2.200 18 2zM21.300 16.600c0-2.700 1.400-4.500 3.300-5.800-1.500-2-3.700-2.600-5.200-2.600-2.400 0-4.200 1.500-6 1.500-1.900 0-3.700-1.500-6-1.500C3.700 8.200.8 11.500.8 17.200.8 24 5 31.600 8.500 31.600c1.800 0 2.700-1.200 5-1.200s3.100 1.200 5 1.200c3.200 0 5.700-5 6.500-7.500-2.400-1.200-3.700-3.900-3.700-7.500z" /><text x="-2.500" y="8.500" font-size="24" font-weight="500" fill="#fff" textLength="23">tv</text></svg>
        <svg class="app" viewBox="-37 -43 74 91"><rect x="-28" y="-28" width="56" height="56" rx="13" fill="#f0eeea" /><path d="M-28-14v-1q0-13 13-13h30q13 0 13 13v1z" fill="#fdc82f" /><path d="M-28-12h56M-28 0h56M-28 14h56" stroke="#c9c6be" stroke-width="1" /></svg>
        <svg class="app" viewBox="-37 -43 74 91"><rect x="-28" y="-28" width="56" height="56" rx="13" fill="url(#violet)" /><g fill="none" stroke="#fff" stroke-width="2.800"><path d="M-10 14A19 19 0 1 1 10 14" /><path d="M-7 6A11.500 11.500 0 1 1 7 6" /></g><circle cy="-3" r="5" fill="#fff" /><path d="M-4.500 5q4.500-3 9 0L3 20q-3 3-6 0z" fill="#fff" /></svg>
        <svg class="app" viewBox="-37 -43 74 91"><rect x="-28" y="-28" width="56" height="56" rx="13" fill="url(#store)" /><path d="M3-17L-12 10M-3-17L14 15M-19 7H5M12 7h7M-15 14l-1 2" stroke="#fff" stroke-width="4.600" stroke-linecap="round" /></svg>
        <svg class="app" viewBox="-37 -43 74 91"><path d="M-26-26h52v52h-52z" fill="#21d789" /><path d="M8-26h18V8z" fill="#3fc6a0" /><path d="M26-8v34h-34z" fill="#fcf84a" /><path d="M-26 8l26 18h-26z" fill="#b5e65a" /><path d="M-19.500-19.500h39v39h-39z" fill="#111" /><text x="-17" y="3" font-size="24" font-weight="700" fill="#fff" textLength="33">PC</text><path d="M-15 13h15" stroke="#fff" stroke-width="3" /></svg>
        <svg class="app" viewBox="-37 -43 74 91"><rect x="-32" y="-32" width="64" height="63" rx="8" fill="#1673fb" /><path d="M-26 7l14-21L-3 4l-10 9h-10z" fill="#b5d2fc" /><path d="M-12-14q11 8 13 20l12-20L26 7q-4 10-13 3L8 4-2 12-12 2z" fill="#fff" /></svg>
        <svg class="app" viewBox="-37 -43 74 91"><rect x="-28" y="-28" width="56" height="56" rx="13" fill="url(#pink)" /><path d="M-8 12v-26L13-18V9" fill="none" stroke="#fff" stroke-width="3.400" /><path d="M-8-17l22.500-4v6L-8-10z" fill="#fff" /><ellipse cx="-11.500" cy="13" rx="5.500" ry="4.500" fill="#fff" /><ellipse cx="9.500" cy="9.500" rx="5.500" ry="4.500" fill="#fff" /></svg>
        <svg class="app" viewBox="-37 -43 74 91"><rect x="-28" y="-28" width="56" height="56" rx="13" fill="#b5c1c6" /><rect x="-25.500" y="-25.500" width="51" height="51" rx="11" fill="#1c1c1c" /><path d="M-19-17l5 3.500-5 3.500M-10-7h8" fill="none" stroke="#fff" stroke-width="1.800" /></svg>
        <svg class="app" viewBox="-37 -43 74 91"><rect x="-28" y="-28" width="56" height="56" rx="13" fill="url(#metal)" /><circle r="24" fill="#3b3b3d" /><circle r="21" fill="none" stroke="#a6a6a8" stroke-width="3" stroke-dasharray="1.500 1.200" /><circle r="15" fill="#5b5b5e" stroke="#b8b8ba" stroke-width="2.500" /><path d="M0 0h16M0 0l-8-14M0 0l-8 14" stroke="#b8b8ba" stroke-width="3" /><circle r="4" fill="#333" stroke="#b8b8ba" stroke-width="1.600" /></svg>
        <svg class="app" viewBox="-37 -43 74 91"><rect x="-28" y="-28" width="56" height="56" rx="13" fill="#f4f3f3" /><circle r="22.500" fill="#fbc934" /><path d="M-19.500-11.300A22.500 22.500 0 0 1 19.500-11.300H0L-9 4z" fill="#dc4437" /><path d="M-19.500-11.300A22.500 22.500 0 0 0 0 22.500L9.500 5-9 5z" fill="#1f9d58" /><circle r="10.500" fill="#fff" /><circle r="8.300" fill="#4b8bf4" /><circle cx="0" cy="41" r="4" fill="#cf9aa6" /></svg>
        <svg class="app" viewBox="-37 -43 74 91"><rect x="-28" y="-28" width="56" height="56" rx="11" fill="#dc3545" /><path d="M-14-17H9q10 0 10 7 0 5-6 8-2 1 0 2 5 2 5 7 0 9-12 9h-20q-7 0-7-6 0-5 5-9-5-2-4-8 1-10 6-10z" fill="#fff" /><path d="M-22-8H7M-22-1h27M-22 7H7" stroke="#dc3545" stroke-width="2.400" /><circle cx="16" cy="16" r="10" fill="#15907f" stroke="#fff" stroke-width="1.500" /><path d="M11 16l4 4 6-8" fill="none" stroke="#fff" stroke-width="2.600" /><circle cx="0" cy="41" r="4" fill="#cf9aa6" /></svg>
        <svg class="app" viewBox="-37 -43 74 91"><path d="M-31-34H6q10 4 16 14H-20V14q-11-12-11-24z" fill="#0b4a6d" /><path d="M-25-27H8q16 8 24 26v33H9Q-12 24-22 3l-3-12z" fill="#1fc6e5" /><path d="M-25-27H8Q22-20 30-4L12-16 7-15v9h-32z" fill="#fff" /><path d="M-23-6H7v-10L27 5 9 26V16h-28z" fill="#fff" /></svg>
        <i class="rule" />
        <svg v-for="n in 2" :key="n" class="app" viewBox="-37 -43 74 91"><rect x="-30" y="-30" width="60" height="60" fill="#f7f7f7" /><path v-for="(c, i) in dockCrosses" :key="i" :d="cross(c)" :stroke="c.color" :stroke-width="c.w" /><circle v-if="n === 2" cx="0" cy="41" r="4" fill="#cf9aa6" /></svg>
        <svg class="app" viewBox="-37 -43 74 91"><circle r="34.500" fill="#6fda44" /><g fill="none" stroke="#fff" stroke-width="5"><path d="M-19-12V2q0 8 7 8t7-8v-14" /><path d="M1 19q1-16 4-22 3-8 10-8 7 1 7 9 0 9-8 9-7-1-11-10-2-5-3-9" stroke-width="4.500" /></g></svg>
        <svg class="app" viewBox="-37 -43 74 91"><circle cx="-1" cy="-3" r="30" fill="#fff" /><circle cx="-1" cy="-3" r="28" fill="#1fb4e4" /><path d="M4-31A28 28 0 0 1 10 23Q-8 32-20 18-2 16 8-2 14-18 4-31z" fill="#0b4f78" /><path d="M-22 14Q0 22 14-3l2-10q4 26-14 30-14 2-24-3z" fill="#67b649" /><ellipse cx="-2" cy="-4" rx="14" ry="19" fill="#f3f7f8" transform="rotate(22 -2 -4)" /><circle cx="20" cy="19" r="13" fill="#fff" /><path d="M15.500 11l10 8-10 8z" fill="#1596d1" /><circle cx="1" cy="41" r="4" fill="#cf9aa6" /></svg>
        <i class="rule late" />
        <svg class="app" viewBox="-37 -43 74 91"><path d="M-18-35h36v6h4v61h-44v-61h4z" fill="#e8e8e8" /><path d="M-20.500-30v62M20.500-30v62" stroke="#333" stroke-width="2" stroke-dasharray="1.500 2.500" /><circle cy="-5" r="15" fill="#1599c4" /><path d="M3-19.700A15 15 0 1 1-12 4L8-3z" fill="#0b4f78" /><path d="M-12 4Q2 12 8-4q6 12-6 14-8 0-14-6z" fill="#67b649" /><ellipse cy="-5" rx="8" ry="10" fill="#fff" /><text y="23.500" font-size="8.500" font-weight="800" fill="#222" text-anchor="middle">ARF</text></svg>
        <svg class="app" viewBox="-37 -43 74 91"><path d="M-33-19h66v37h-66z" fill="#eceae6" /><path d="M-33-19h66v4h-66z" fill="#d6dcd3" /><path d="M-24-12h24v22h-24z" fill="#f3dcd8" /><path d="M10-10h12V14H10z" fill="#cfdc35" /><path d="M22-17h11v26H22z" fill="#177f86" /><path d="M-33-19h7v37h-7z" fill="#bfc7bd" /><circle cx="20" cy="19" r="11" fill="#fff" /><circle cx="20" cy="19" r="9.500" fill="#1684b4" /><ellipse cx="20" cy="19" rx="5" ry="6.500" fill="#fff" /><path d="M12 24q9 6 14-5 3 11-6 11-5 0-8-6z" fill="#67b649" /><circle cx="28" cy="29" r="4.500" fill="#fff" /><path d="M26.500 26l4 3-4 3z" fill="#1596d1" /></svg>
        <svg class="app" viewBox="-37 -43 74 91"><path d="M-33-19h65v37h-65z" fill="#f6f6f6" /><path d="M-33-19h65v9h-65z" fill="#2a2a2d" /><path d="M-28-5h40M-28-1h36M-22 3h44M-22 7h34M-28 12h38" stroke="#c9ccd0" stroke-width="1.500" /><path d="M-33-10h5v28h-5z" fill="#dfe2e4" /><rect x="10" y="11" width="20" height="20" rx="5" fill="#fff" /><circle cx="20" cy="21" r="8" fill="#fbc934" /><path d="M13 17a8 8 0 0 1 14 0h-7l-3 6z" fill="#dc4437" /><path d="M13 17a8 8 0 0 0 7 12l3-6h-6z" fill="#1f9d58" /><circle cx="20" cy="21" r="3.800" fill="#4b8bf4" stroke="#fff" stroke-width="1" /></svg>
        <svg class="app" viewBox="-37 -43 74 91"><path d="M-24-27h48l-6 54q-18 6-36 0z" fill="#5e6366" /><path d="M-24-27h48l-6 54q-4 2-9 2.500L6-26h-20l3 54q-4-.5-7-1.500z" fill="#7b8184" /><ellipse cy="-27" rx="24" ry="5" fill="#3f4346" /><path d="M-20-26l5-6 6 3 5-5 6 5 6-4 5 4 7 4-9 5-10 1-12-1z" fill="#eeece8" /><path d="M-10-30l3 6M1-31l2 7" stroke="#c3574a" stroke-width="1.800" /></svg>
      </div>
    </footer>
  </div>
</template>

<style>
html,
body {
  margin: 0;
  background: #30030d;
}
</style>

<style scoped>
* {
  box-sizing: border-box;
}
.desktop {
  position: relative;
  width: 2560px;
  height: 1600px;
  overflow: hidden;
  display: flex;
  flex-direction: column;
  background: linear-gradient(90deg, #4a6ea0 0, #4a6ea0 20px, #3393b5 60px, #3393b5 530px, #12102f 540px, #15143a 2540px, #282a5e 2560px) 0 0 / 100% 90px no-repeat, linear-gradient(90deg, #40000f, #2b020b 30%, #2d020c 80%, #38030f);
  font-family: Roboto, "Liberation Sans", sans-serif;
  font-size: 24.5px;
  color: #333;
}
svg {
  display: block;
  flex: none;
}
.menubar {
  height: 48px;
  flex: none;
  display: flex;
  align-items: center;
  padding-left: 44px;
  background: linear-gradient(90deg, #1e3b61 0, #1d335b 20%, #1b2951 36%, #1b1f4a 56%, #1c1c4a 100%);
  font-family: Inter, sans-serif;
  font-size: 25px;
  font-weight: 500;
  letter-spacing: -0.25px;
  color: #eceef2;
}
.apple {
  margin: -2px 45px 0 0;
}
.menus {
  display: flex;
  width: 1448px;
}
.menus span {
  flex: none;
  white-space: nowrap;
}
.menus .strong {
  font-weight: 700;
  letter-spacing: 0.35px;
}
.pc {
  font: 700 11px Inter, sans-serif;
  fill: #fff;
  stroke: none;
  letter-spacing: 0.5px;
}
.clock {
  display: flex;
  gap: 18px;
  margin: -1px 0 0 10px;
  white-space: nowrap;
  letter-spacing: 0.25px;
}
.time {
  font-variant-numeric: tabular-nums;
  letter-spacing: 0;
}
.window {
  margin-top: 2px;
  height: 1438px;
  flex: none;
  border-radius: 20px;
  overflow: hidden;
  display: flex;
  flex-direction: column;
  background: #f5f5f5;
}
.titlebar {
  height: 58px;
  flex: none;
  display: flex;
  align-items: center;
  gap: 16px;
  padding-left: 16px;
  background: #f0eef1;
  border-top: 2px solid #fbfafb;
  border-bottom: 2px solid #cfcdd0;
}
.light {
  width: 24px;
  height: 24px;
  border-radius: 50%;
  margin-bottom: 2px;
}
.red { background: #fe5f58; border: 1px solid #e2453f; }
.amber { background: #febc40; border: 1px solid #dfa02f; }
.green { background: #35c84a; border: 1px solid #24ab38; }
.title {
  flex: 1;
  margin-left: -136px;
  padding-bottom: 3px;
  text-align: center;
  font: 700 26px Inter, sans-serif;
  letter-spacing: 0.3px;
  color: #444;
}
.toolbar {
  height: 78px;
  flex: none;
  display: flex;
  align-items: center;
}
.seg {
  box-shadow: inset -2px 0 #d4d4d4;
}
.seg.open {
  box-shadow: none;
}
.fit {
  width: 196px;
  height: 46px;
  margin-bottom: 4px;
  display: flex;
  border: 2px solid #666;
  border-radius: 3px;
  color: #333;
  line-height: 42px;
}
.fit span {
  width: 158px;
  padding-left: 14px;
  border-right: 2px solid #e0e0e0;
}
.fit i {
  flex: 1;
  display: flex;
  align-items: center;
  justify-content: center;
}
.showme {
  flex: 1;
  display: flex;
  align-items: center;
  gap: 10px;
  padding: 0 0 2px 792px;
  color: #000;
}
.workspace {
  height: 1200px;
  flex: none;
  display: flex;
}
.side {
  width: 420px;
  flex: none;
  display: flex;
  flex-direction: column;
  background: #fff;
  border-top: 2px solid #d4d4d4;
  border-right: 2px solid #d4d4d4;
}
.tabs {
  display: flex;
  height: 56px;
  flex: none;
  line-height: 50px;
}
.tabs .on {
  width: 156px;
  padding-left: 35px;
  font-weight: 700;
  letter-spacing: 0.8px;
  color: #222;
}
.tabs .off {
  flex: 1;
  display: flex;
  align-items: center;
  justify-content: space-between;
  padding: 0 15px 2px 24px;
  background: #fafafa;
  border: solid #d4d4d4;
  border-width: 0 0 2px 2px;
}
.sources {
  height: 101px;
  flex: none;
  padding: 8px 22px 0;
  border-bottom: 2px solid #e6e6e6;
}
.source {
  display: flex;
  align-items: center;
  gap: 12px;
  height: 40px;
  padding-left: 18px;
  white-space: nowrap;
}
.source span {
  padding-bottom: 2px;
}
.source.picked {
  background: #e6e6e6;
}
.search {
  display: flex;
  flex: none;
  gap: 8px;
  height: 47px;
  margin: 20px 0 0 16px;
}
.box {
  width: 264px;
  height: 47px;
  display: flex;
  align-items: center;
  justify-content: space-between;
  padding: 0 12px 0 16px;
  border: 2px solid #c8c8c8;
  border-radius: 3px;
  color: #9b9b9b;
}
h3 {
  height: 58px;
  flex: none;
  margin: 0;
  padding-left: 36px;
  font-size: 24.5px;
  line-height: 66px;
  font-weight: 700;
  color: #000;
}
.fields {
  display: flex;
  flex: 1;
  min-height: 0;
  overflow: hidden;
  color: #000;
}
.list {
  width: 388px;
}
.field {
  display: flex;
  align-items: center;
  height: 42px;
  padding-left: 36px;
  white-space: nowrap;
}
.field.nested {
  padding-left: 66px;
}
.field b {
  width: 38px;
  margin-right: 20px;
  text-align: right;
  font-size: 18.5px;
  font-weight: 400;
  padding-top: 3px;
  color: #3a7f9f;
}
.field svg {
  margin: 2px 25px 0 11px;
  color: #3a7f9f;
}
.measures .field svg {
  color: #45a882;
}
.generated span {
  font-style: italic;
  letter-spacing: 0.55px;
}
.dimensions {
  padding-bottom: 2px;
}
.measures::before {
  content: "";
  display: block;
  width: 346px;
  height: 2px;
  margin-left: 30px;
  background: #dedede;
}
.track {
  width: 30px;
  border: solid #e6e6e6;
  border-width: 0 2px;
}
.fields .track {
  padding: 195px 0 0 6px;
  background: #fafafa;
}
.track i {
  display: block;
  width: 16px;
  height: 683px;
  border-radius: 8px;
  background: #c2c2c2;
}
.cards {
  width: 308px;
  flex: none;
  margin-left: 12px;
  display: flex;
  flex-direction: column;
  gap: 12px;
}
.card {
  flex: none;
  border: 2px solid #d4d4d4;
  background: #fafafa;
}
h4 {
  margin: 0;
  padding-left: 12px;
  font-size: 24.5px;
  font-weight: 400;
  line-height: 59px;
  height: 58px;
  letter-spacing: 0.1px;
  white-space: nowrap;
}
.pages { height: 124px; }
.filters { height: 156px; }
.marks { height: 452px; }
.legend { height: 142px; background: #fff; }
.yearcard { height: 266px; background: #fff; }
.legend h4,
.yearcard h4 {
  background: #fafafa;
}
.yearcard h4 {
  letter-spacing: 0.4px;
}
.frow {
  display: flex;
  align-items: center;
  gap: 14px;
  margin: 6px 0 0 20px;
}
.pill {
  width: 192px;
  height: 40px;
  display: flex;
  align-items: center;
  padding: 0 0 1px 21px;
  border-radius: 20px;
  background: #4996b2;
  color: #fff;
  letter-spacing: 0.2px;
  white-space: nowrap;
}
.pill.wide { width: 246px; letter-spacing: 0.5px; }
.pill.sales { background: #00b180; }
.pill.target { background: #009969; }
.plus { margin: 0 11px 0 3px; }
.blend { margin: 0 0 0 17px; }
.marksbody {
  display: flex;
  height: 390px;
}
.encodings {
  width: 274px;
  padding-left: 12px;
}
.btns {
  display: flex;
  gap: 12px;
  height: 84px;
  margin-bottom: 18px;
  font-size: 21.5px;
}
.btns span {
  width: 76px;
  display: flex;
  flex-direction: column;
  align-items: center;
  justify-content: space-between;
  padding: 13px 0 2px;
  border: 2px solid #d4d4d4;
}
.btns span:nth-child(2) {
  width: 74px;
}
.btns.cut {
  height: 28px;
  margin-bottom: 12px;
}
.btns.cut span {
  padding: 0;
  border-top: 0;
  line-height: 24px;
}
.mrow {
  display: flex;
  align-items: center;
  gap: 8px;
  height: 40px;
  margin: 0 0 6px 14px;
}
.marks .track {
  padding: 98px 0 0 6px;
}
.marks .track i {
  height: 286px;
}
.ramp {
  position: relative;
  width: 288px;
  height: 32px;
  margin: 7px 0 0 7px;
  border: 2px solid #a9a393;
  background: linear-gradient(90deg, #22763f, #59a668 22%, #8ebb61 33%, #b9c55c 42%, #f3d06a 50%, #ffbd59 55%, #f98e4f 68%, #e9694a 80%, #d64b47 90%, #be2a3e);
}
.ramp i {
  position: absolute;
  left: 142px;
  top: 25px;
  width: 2px;
  height: 8px;
  background: #000;
}
.ends {
  display: flex;
  justify-content: space-between;
  padding: 6px 10px 0 8px;
  font-family: "Open Sans", sans-serif;
  font-size: 24.5px;
  letter-spacing: 0.2px;
  line-height: 28px;
}
.yearcard label {
  display: flex;
  align-items: center;
  gap: 10px;
  height: 30px;
  margin: 8px 0 0 12px;
  font-family: "Open Sans", sans-serif;
  font-size: 24.5px;
  letter-spacing: 0.4px;
}
.yearcard label span {
  padding-top: 3px;
}
.canvas {
  flex: none;
  width: 1796px;
  margin-left: 12px;
  display: flex;
  flex-direction: column;
  gap: 12px;
}
.shelf {
  height: 56px;
  flex: none;
  border: 2px solid #d4d4d4;
  background: #fafafa;
}
.shelf span {
  width: 249px;
  height: 52px;
  display: flex;
  align-items: center;
  gap: 14px;
  padding-left: 12px;
  border-right: 2px solid #d4d4d4;
}
.view {
  height: 1052px;
  flex: none;
  border: 2px solid #d4d4d4;
  background: #fff;
}
.vtitle {
  font: 350 39.5px "Open Sans", sans-serif;
  fill: #333;
}
.mark {
  font: 400 24px "Open Sans", sans-serif;
  fill: #fff;
  fill-opacity: 0.92;
  text-anchor: middle;
}
.sheets {
  height: 60px;
  flex: none;
  display: flex;
  border-top: 2px solid #cbcbcb;
  background: linear-gradient(#e6e6e6, #dfdfdf);
  color: #5a5a5a;
}
.sheets span {
  display: flex;
  align-items: center;
  flex: none;
  padding-left: 12px;
  border-right: 2px solid #cbcbcb;
  font-size: 24.5px;
  white-space: nowrap;
}
.sheets .ds { width: 262px; padding-left: 19px; gap: 11px; letter-spacing: 0.1px; }
.sheets .s1 { width: 187px; }
.sheets .s2 { width: 263px; }
.sheets .s3 { width: 239px; }
.sheets .s4 { width: 249px; padding-left: 16px; gap: 9px; }
.sheets .add { width: 64px; padding: 3px 0 0 17px; }
.sheets .current {
  background: #fafafa;
  font-weight: 700;
  letter-spacing: 0.15px;
  padding-bottom: 2px;
  color: #4d4d4d;
}
.status {
  height: 42px;
  flex: none;
  display: flex;
  align-items: center;
  border-top: 2px solid #c6c6c6;
  background: linear-gradient(#e2e2e2, #d2d2d2);
  font-size: 21px;
  color: #000;
  white-space: nowrap;
}
.t1 { width: 108px; padding-left: 24px; }
.t2 { width: 198px; padding-left: 24px; letter-spacing: -0.25px; }
.t3 { width: 1502px; padding-left: 24px; letter-spacing: 0.05px; }
.user {
  width: 256px;
  height: 40px;
  display: flex;
  align-items: center;
  padding-left: 12px;
  border: solid #bcbcbc;
  border-width: 0 2px;
}
.user span {
  width: 170px;
  margin-left: 19px;
  letter-spacing: -0.45px;
}
.preview {
  position: absolute;
  left: 2264px;
  top: 1294px;
  width: 272px;
  height: 176px;
  padding: 7px;
  border-radius: 8px;
  background: #000;
  box-shadow: 0 4px 60px rgba(0, 0, 0, 0.4), 0 2px 8px rgba(0, 0, 0, 0.4);
}
.preview svg {
  border: 1px solid #fff;
  box-sizing: content-box;
}
.dockbar {
  flex: 1;
  padding: 10px 57px 0;
}
.dock {
  width: 2446px;
  height: 91px;
  display: flex;
  padding-left: 3px;
  border: 2px solid #6b3a45;
  border-radius: 24px;
  background: #45131f;
}
.app {
  width: 74px;
  height: 91px;
  margin-top: -2px;
  overflow: visible;
  font-family: Inter, sans-serif;
}
.rule {
  flex: none;
  width: 2px;
  height: 68px;
  margin: 10px 14px 0 18px;
  background: #7b4c57;
}
.rule.late {
  margin: 10px 15px 0 18px;
}
</style>
